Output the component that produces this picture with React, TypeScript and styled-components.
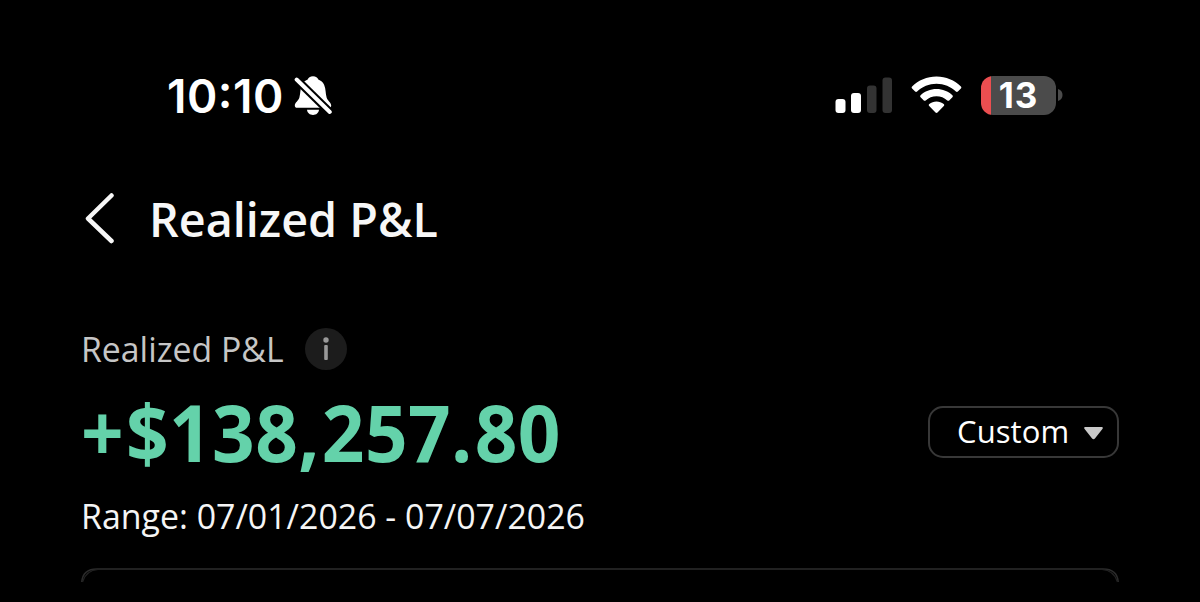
import { FC } from 'react';
import styled, { createGlobalStyle } from 'styled-components';

const GlobalStyle = createGlobalStyle`
  * {
    box-sizing: border-box;
  }
  body {
    margin: 0;
    background: #000;
    overflow: hidden;
    font-family: 'Open Sans', 'Noto Sans', sans-serif;
  }
`;

const Screen = styled.main`
  display: flex;
  flex-direction: column;
  height: 602px;
  overflow: hidden;
  background: #000;
  color: #fff;
`;

const StatusBar = styled.header`
  display: flex;
  align-items: center;
  justify-content: space-between;
  height: 40px;
  margin-top: 75px;
  padding: 0 137px 0 167px;
`;

const StatusGroup = styled.div`
  display: flex;
  align-items: center;
  svg {
    display: block;
    flex: none;
  }
`;

const Clock = styled.span`
  width: 126.5px;
  padding-top: 2px;
  font: 600 46px/40px Inter, sans-serif;
  letter-spacing: 0.5px;
  white-space: nowrap;
`;

const Colon = styled.span`
  line-height: 0;
  vertical-align: 5px;
`;

const Battery = styled.div`
  display: flex;
  align-items: center;
  gap: 2px;
  margin-left: 19px;
`;

const BatteryBody = styled.div<{ $level: number }>`
  width: 75px;
  height: 39px;
  border-radius: 12px;
  background: linear-gradient(to right, #eb4e50 ${({ $level }) => $level}%, #4b4b4b ${({ $level }) => $level}%);
  font: 700 35px/39px Inter, sans-serif;
  letter-spacing: 0.8px;
  text-align: center;
`;

const TitleBar = styled.nav`
  display: flex;
  align-items: center;
  height: 64px;
  margin-top: 71px;
  padding-left: 84px;
  svg {
    display: block;
  }
`;

const Title = styled.h1`
  margin: 0 0 0 33px;
  padding-top: 1px;
  font-size: 46.7px;
  font-weight: 600;
  line-height: 64px;
  color: #f7f7f7;
`;

const Summary = styled.section`
  display: flex;
  align-items: center;
  justify-content: space-between;
  margin-top: 78px;
  padding: 0 81px;
`;

const Figures = styled.div`
  display: flex;
  flex-direction: column;
`;

const LabelRow = styled.div`
  display: flex;
  align-items: center;
  height: 41px;
  font-size: 33.8px;
  color: #c6c6c6;
`;

const InfoBadge = styled.span`
  display: flex;
  align-items: center;
  justify-content: center;
  width: 42px;
  height: 42px;
  margin-left: 21px;
  padding-top: 1px;
  border-radius: 50%;
  background: #1c1c1c;
`;

const Amount = styled.strong`
  height: 100px;
  margin-top: 13px;
  font-size: 78px;
  font-weight: 700;
  line-height: 100px;
  letter-spacing: 0.4px;
  white-space: nowrap;
  color: #64d2aa;
  transform: scaleX(0.957);
  transform-origin: left center;
`;

const Mark = styled.span`
  margin-right: 2px;
`;

const Range = styled.span`
  height: 46px;
  margin-top: 11px;
  font-size: 33.9px;
  line-height: 46px;
  color: #f5f5f5;
`;

const RangeSelect = styled.button`
  display: flex;
  align-items: center;
  justify-content: space-between;
  width: 191px;
  height: 52px;
  margin-bottom: 4px;
  padding: 0 14px 1px 27px;
  border: 2px solid #383838;
  border-radius: 15px;
  background: transparent;
  color: #fff;
  font-family: inherit;
  font-size: 31px;
  line-height: 46px;
  letter-spacing: 0.1px;
  svg {
    margin-top: 4px;
  }
`;

const ChartCard = styled.div`
  flex: none;
  height: 15px;
  margin: 29px 81px 0;
  svg {
    display: block;
  }
`;

const BellOffIcon: FC = () => (
  <svg width='38' height='40' viewBox='0 0 38 40'>
    <path
      fill='#fff'
      d='M19 1.200c-2.800 0-4.700 1.400-5.300 3.300-2.600 1-4.700 2.900-5.800 5.300-1.900 4.200-1.300 8.700-2.500 12.700C4.400 25.700.8 27.700.8 30.500c0 1.400.9 2.300 2.300 2.300h31.800c1.400 0 2.300-.9 2.300-2.300 0-2.800-3.600-4.800-4.600-8-1.200-4-.6-8.500-2.500-12.700-1.100-2.400-3.200-4.300-5.800-5.300-.6-1.900-2.500-3.300-5.300-3.300z'
    />
    <path fill='#fff' d='M13 34.800h12c-.4 3.200-2.800 5.200-6 5.200s-5.600-2-6-5.200z' />
    <path stroke='#000' strokeWidth='8.200' d='M0 2 38 39.200' />
    <path stroke='#fff' strokeWidth='3.900' strokeLinecap='round' d='M2.600 4.500 35.800 37' />
  </svg>
);

const SignalIcon: FC = () => (
  <svg width='58' height='37' viewBox='0 0 58 37'>
    <rect x='0.500' y='22' width='10' height='14' rx='3' fill='#fff' />
    <rect x='16' y='16' width='10' height='20' rx='3' fill='#fff' />
    <rect x='32' y='8.500' width='9.500' height='27.500' rx='3' fill='#333' />
    <rect x='47.500' y='0.500' width='9.500' height='35.500' rx='3' fill='#333' />
  </svg>
);

const WifiIcon = styled.svg`
  margin-left: 18px;
`;

const App: FC = () => (
  <Screen>
    <GlobalStyle />
    <StatusBar>
      <StatusGroup>
        <Clock>
          10<Colon>:</Colon>10
        </Clock>
        <BellOffIcon />
      </StatusGroup>
      <StatusGroup>
        <SignalIcon />
        <WifiIcon width='51' height='38' viewBox='0 0 51 38' fill='#fff'>
          <path d='M25.500.500C35 .500 43.600 4.300 49.900 10.400c.6.600.6 1.400 0 2l-3 3.100c-.6.600-1.400.600-2 0C39.800 10.700 33 7.700 25.500 7.700S11.200 10.700 6.100 15.500c-.6.600-1.400.600-2 0l-3-3.100c-.6-.6-.6-1.400 0-2C7.400 4.300 16 .500 25.500.500z' />
          <path d='M25.500 13c6.100 0 11.700 2.300 15.900 6.200.6.600.6 1.400 0 2l-3.200 3.200c-.6.600-1.300.600-1.900 0-2.900-2.600-6.700-4.200-10.800-4.200s-7.900 1.600-10.800 4.200c-.6.600-1.300.600-1.900 0l-3.200-3.200c-.6-.6-.6-1.400 0-2C13.800 15.300 19.400 13 25.500 13z' />
          <path d='M25.500 25.400c2.700 0 5.200 1 7.200 2.600.7.600.7 1.300.1 1.900l-6.300 6.700c-.6.600-1.400.6-2 0l-6.300-6.700c-.6-.6-.6-1.300.1-1.900 2-1.600 4.500-2.600 7.200-2.600z' />
        </WifiIcon>
        <Battery>
          <BatteryBody $level={14}>13</BatteryBody>
          <svg width='5' height='12' viewBox='0 0 5 12'>
            <path d='M0 0c6 1.500 6 10.500 0 12z' fill='#4b4b4b' />
          </svg>
        </Battery>
      </StatusGroup>
    </StatusBar>

    <TitleBar>
      <svg width='32' height='52' viewBox='0 0 32 52' fill='none' stroke='#f7f7f7' strokeWidth='4.500' strokeLinecap='round' strokeLinejoin='round'>
        <path d='M27.500 3.500 4 26.500l23.500 22.500' />
      </svg>
      <Title>Realized P&amp;L</Title>
    </TitleBar>

    <Summary>
      <Figures>
        <LabelRow>
          Realized P&amp;L
          <InfoBadge>
            <svg width='8' height='24' viewBox='0 0 8 24' fill='#999'>
              <circle cx='4' cy='3' r='2.700' />
              <rect x='2.200' y='8' width='3.600' height='15' rx='1' />
            </svg>
          </InfoBadge>
        </LabelRow>
        <Amount>
          <Mark>+</Mark>$138<Mark>,</Mark>257<Mark>.</Mark>80
        </Amount>
        <Range>Range: 07/01/2026 - 07/07/2026</Range>
      </Figures>
      <RangeSelect type='button'>
        Custom
        <svg width='19' height='13' viewBox='0 0 19 13'>
          <path d='M1.500 0h16c1.300 0 1.700 1 .9 2l-7.500 9.500c-.8 1-2 1-2.800 0L.6 2C-.2 1 .2 0 1.500 0z' fill='#c9c9c9' />
        </svg>
      </RangeSelect>
    </Summary>

    <ChartCard>
      <svg width='1038' height='15' viewBox='0 0 1038 15' fill='none'>
        <path d='M.800 14C1.500 5 7.500 1 16 1h1006c8.500 0 14.500 4 15.200 13' stroke='#2c2c2c' strokeWidth='1.500' />
        <path d='M1.500 14C4 6 9 2 17 1.500M1036.500 14C1034 6 1029 2 1021 1.500' stroke='#222' strokeWidth='1.200' />
      </svg>
    </ChartCard>
  </Screen>
);

export default App;
